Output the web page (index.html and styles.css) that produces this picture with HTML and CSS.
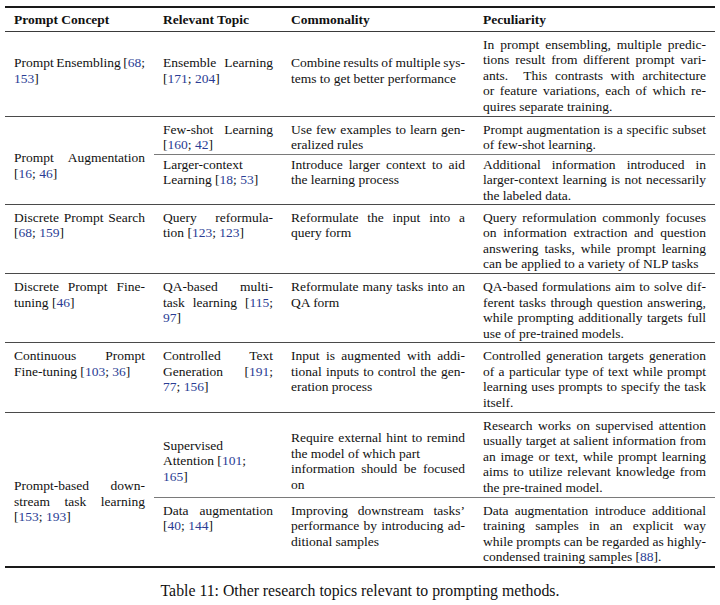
FILE: index.html
```html
<!DOCTYPE html>
<html>
<head>
<meta charset="utf-8">
<link rel="stylesheet" href="styles.css">
</head>
<body>
<div class="page">
<table class="t">
<colgroup><col class="c1"><col class="c2"><col class="c3"><col class="c4"></colgroup>
<thead>
<tr><th>Prompt Concept</th><th>Relevant Topic</th><th>Commonality</th><th>Peculiarity</th></tr>
</thead>
<tbody>
<tr class="grp">
<td class="mid up"><div class="j">Prompt Ensembling [<span class="cite">68</span>;</div><div><span class="cite">153</span>]</div></td>
<td class="mid up"><div class="j">Ensemble Learning</div><div>[<span class="cite">171</span>; <span class="cite">204</span>]</div></td>
<td class="mid up"><div class="j">Combine results of multiple sys-</div><div>tems to get better performance</div></td>
<td><div class="j">In prompt ensembling, multiple predic-</div><div class="j">tions result from different prompt vari-</div><div class="j">ants.&nbsp; This contrasts with architecture</div><div class="j">or feature variations, each of which re-</div><div>quires separate training.</div></td>
</tr>
<tr class="grp">
<td rowspan="2" class="mid shift2"><div class="j">Prompt Augmentation</div><div>[<span class="cite">16</span>; <span class="cite">46</span>]</div></td>
<td><div class="j">Few-shot Learning</div><div>[<span class="cite">160</span>; <span class="cite">42</span>]</div></td>
<td><div class="j">Use few examples to learn gen-</div><div>eralized rules</div></td>
<td><div class="j">Prompt augmentation is a specific subset</div><div>of few-shot learning.</div></td>
</tr>
<tr class="sub tight">
<td><div>Larger-context</div><div>Learning [<span class="cite">18</span>; <span class="cite">53</span>]</div></td>
<td><div class="j">Introduce larger context to aid</div><div>the learning process</div></td>
<td><div class="j">Additional information introduced in</div><div class="j">larger-context learning is not necessarily</div><div>the labeled data.</div></td>
</tr>
<tr class="grp">
<td><div class="j">Discrete Prompt Search</div><div>[<span class="cite">68</span>; <span class="cite">159</span>]</div></td>
<td><div class="j">Query reformula-</div><div>tion [<span class="cite">123</span>; <span class="cite">123</span>]</div></td>
<td><div class="j">Reformulate the input into a</div><div>query form</div></td>
<td><div class="j">Query reformulation commonly focuses</div><div class="j">on information extraction and question</div><div class="j">answering tasks, while prompt learning</div><div>can be applied to a variety of NLP tasks</div></td>
</tr>
<tr class="grp">
<td><div class="j">Discrete Prompt Fine-</div><div>tuning [<span class="cite">46</span>]</div></td>
<td><div class="j">QA-based multi-</div><div class="j">task learning [<span class="cite">115</span>;</div><div><span class="cite">97</span>]</div></td>
<td><div class="j">Reformulate many tasks into an</div><div>QA form</div></td>
<td><div class="j">QA-based formulations aim to solve dif-</div><div class="j">ferent tasks through question answering,</div><div class="j">while prompting additionally targets full</div><div>use of pre-trained models.</div></td>
</tr>
<tr class="grp">
<td><div class="j">Continuous Prompt</div><div>Fine-tuning [<span class="cite">103</span>; <span class="cite">36</span>]</div></td>
<td><div class="j">Controlled Text</div><div class="j">Generation [<span class="cite">191</span>;</div><div><span class="cite">77</span>; <span class="cite">156</span>]</div></td>
<td><div class="j">Input is augmented with addi-</div><div class="j">tional inputs to control the gen-</div><div>eration process</div></td>
<td><div class="j">Controlled generation targets generation</div><div class="j">of a particular type of text while prompt</div><div class="j">learning uses prompts to specify the task</div><div>itself.</div></td>
</tr>
<tr class="grp">
<td rowspan="2" class="mid shift6"><div class="j">Prompt-based down-</div><div class="j">stream task learning</div><div>[<span class="cite">153</span>; <span class="cite">193</span>]</div></td>
<td class="mid shift6a"><div>Supervised</div><div>Attention [<span class="cite">101</span>;</div><div><span class="cite">165</span>]</div></td>
<td class="mid shift6a"><div class="j">Require external hint to remind</div><div>the model of which part</div><div class="j">information should be focused</div><div>on</div></td>
<td><div class="j">Research works on supervised attention</div><div class="j">usually target at salient information from</div><div class="j">an image or text, while prompt learning</div><div class="j">aims to utilize relevant knowledge from</div><div>the pre-trained model.</div></td>
</tr>
<tr class="sub">
<td><div class="j">Data augmentation</div><div>[<span class="cite">40</span>; <span class="cite">144</span>]</div></td>
<td><div class="j">Improving downstream tasks’</div><div class="j">performance by introducing ad-</div><div>ditional samples</div></td>
<td><div class="j">Data augmentation introduce additional</div><div class="j">training samples in an explicit way</div><div class="j">while prompts can be regarded as highly-</div><div>condensed training samples [<span class="cite">88</span>].</div></td>
</tr>
</tbody>
</table>
<p class="cap">Table 11: Other research topics relevant to prompting methods.</p>
</div>
</body>
</html>
```

FILE: styles.css
```css
html, body {
  margin: 0;
  padding: 0;
  background: #ffffff;
}

body {
  color: #111111;
  font-family: "Liberation Serif", "Times New Roman", serif;
}

.page {
  padding: 6px 5px 0 5px;
}

.t {
  border-collapse: collapse;
  table-layout: fixed;
  width: 710px;
  font-size: 13.5px;
  line-height: 15.6px;
  border-top: 2px solid #1a1a1a;
  border-bottom: 2px solid #1a1a1a;
}

.c1 { width: 149px; }
.c2 { width: 128px; }
.c3 { width: 192px; }
.c4 { width: 241px; }

.t th {
  font-weight: bold;
  text-align: left;
  padding: 4px 9px 3px;
  border-bottom: 1px solid #3a3a3a;
}

.t td {
  padding: 5px 9px 1px;
  vertical-align: top;
  text-align: left;
}

.t td div {
  white-space: nowrap;
}

.t tr.grp > td {
  border-top: 1px solid #4a4a4a;
}

.t tr.sub > td {
  border-top: 1px solid #7a7a7a;
}

.t tr.tight > td {
  padding-top: 2px;
  padding-bottom: 0;
}

.t td.mid {
  vertical-align: middle;
}

.t td.up {
  padding-top: 0;
  padding-bottom: 6px;
}

.t td.shift2 {
  padding-top: 13px;
}

.t td.shift6 {
  padding-top: 25px;
}

.t td.shift6a {
  padding-top: 14px;
}

.j {
  text-align: justify;
  text-align-last: justify;
  word-spacing: -1px;
}

.cite {
  color: #2a3d94;
}

.cap {
  margin: 14px 0 0;
  text-align: center;
  font-size: 15.8px;
  line-height: 18px;
}
```
